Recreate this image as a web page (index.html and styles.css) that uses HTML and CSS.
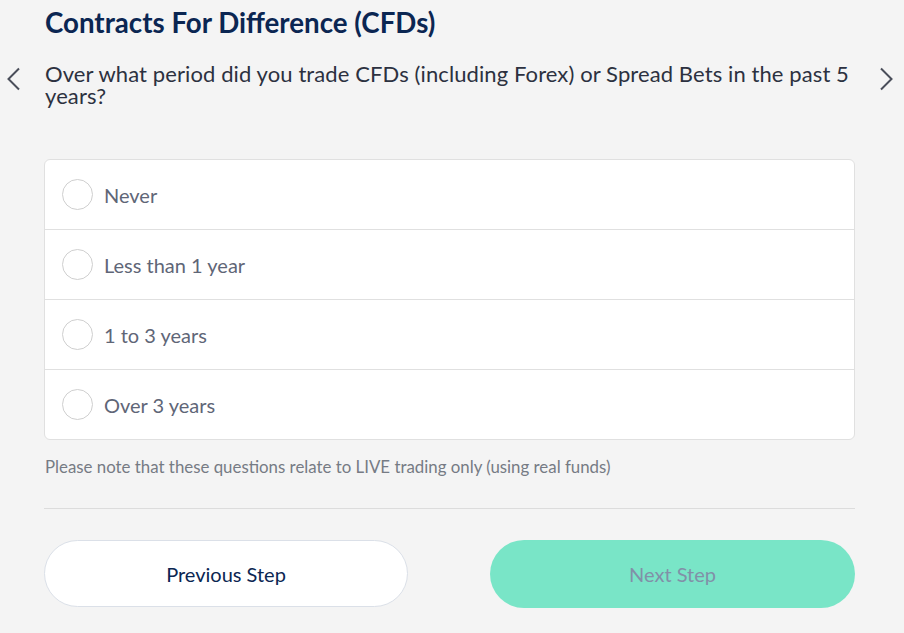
FILE: index.html
```html
<!DOCTYPE html>
<html>
<head>
<meta charset="utf-8">
<link rel="stylesheet" href="styles.css">
</head>
<body>
<div class="page">
  <h1 class="title">Contracts For Difference (CFDs)</h1>
  <div class="qrow">
    <div class="nav nav-left">
      <svg width="14" height="24" viewBox="0 0 14 24"><path d="M12 1.5 L1.5 12 L12 22.5" fill="none" stroke="#4a4e5a" stroke-width="2"/></svg>
    </div>
    <p class="question">Over what period did you trade CFDs (including Forex) or Spread Bets in the past 5 years?</p>
    <div class="nav nav-right">
      <svg width="14" height="24" viewBox="0 0 14 24"><path d="M2 1.5 L12.5 12 L2 22.5" fill="none" stroke="#4a4e5a" stroke-width="2"/></svg>
    </div>
  </div>
  <div class="options">
    <label class="option"><span class="radio"></span><span class="opt-text">Never</span></label>
    <label class="option"><span class="radio"></span><span class="opt-text">Less than 1 year</span></label>
    <label class="option"><span class="radio"></span><span class="opt-text">1 to 3 years</span></label>
    <label class="option"><span class="radio"></span><span class="opt-text">Over 3 years</span></label>
  </div>
  <p class="note">Please note that these questions relate to LIVE trading only (using real funds)</p>
  <hr class="divider">
  <div class="buttons">
    <button class="btn btn-prev">Previous Step</button>
    <button class="btn btn-next">Next Step</button>
  </div>
</div>
</body>
</html>
```
FILE: styles.css
```css
* { box-sizing: border-box; }
html, body { margin: 0; padding: 0; }
body {
  background: #f4f4f4;
  font-family: Lato, "Open Sans", sans-serif;
  width: 904px;
  height: 633px;
  overflow: hidden;
}
.page {
  padding: 5px 49px 0 44px;
}
.title {
  margin: 0 0 0 1px;
  font-size: 27.7px;
  line-height: 35px;
  font-weight: 700;
  color: #0b2652;
}
.qrow {
  display: flex;
  align-items: flex-start;
  margin: 23px -49px 0 -44px;
}
.nav {
  flex: none;
  display: flex;
  padding-top: 4px;
}
.nav-left { width: 45px; padding-left: 7px; }
.nav-right { width: 49px; justify-content: flex-end; padding-right: 11px; }
.question {
  flex: 1;
  margin: 0;
  font-size: 22px;
  line-height: 22px;
  letter-spacing: 0.1px;
  color: #2c3140;
}
.options {
  margin-top: 52px;
  background: #fff;
  border: 1px solid #e0e0e0;
  border-radius: 6px;
}
.option {
  display: flex;
  align-items: center;
  height: 70px;
  padding-left: 17px;
  border-top: 1px solid #e0e0e0;
}
.option:first-child { border-top: none; height: 69px; }
.radio {
  width: 31px;
  height: 31px;
  border: 1px solid #cfcfcf;
  border-radius: 50%;
  background: #fff;
  flex: none;
}
.opt-text {
  margin-left: 11px;
  font-size: 20px;
  color: #5f6677;
}
.note {
  margin: 17px 0 0 1px;
  font-size: 16.85px;
  line-height: 20px;
  color: #767b84;
}
.divider {
  margin: 31px 0 0;
  border: none;
  border-top: 1px solid #dcdcdc;
}
.buttons {
  display: grid;
  grid-template-columns: 364px 365px;
  justify-content: space-between;
  margin-top: 31px;
}
.btn {
  height: 67px;
  border-radius: 34px;
  font-family: Lato, "Open Sans", sans-serif;
  font-size: 20px;
  cursor: pointer;
}
.btn-prev {
  background: #fff;
  border: 1px solid #dbe0e8;
  color: #0b2652;
}
.btn-next {
  background: #79e5c7;
  border: none;
  color: #8190a8;
  height: 68px;
}
```
